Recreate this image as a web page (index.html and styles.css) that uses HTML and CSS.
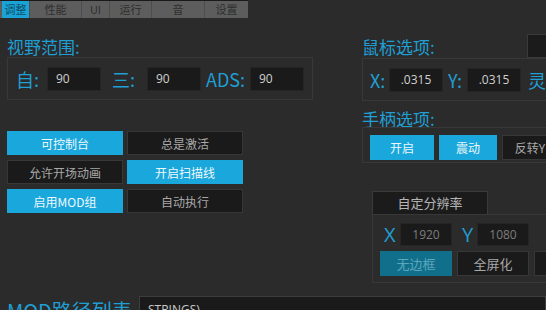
FILE: index.html
```html
<!DOCTYPE html>
<html>
	<head>
		<meta charset="UTF-8">
		<title>设置</title>
		<link rel="stylesheet" href="styles.css">
	</head>
	<body>
		<div class="tabbar">
			<div class="tab on">调整</div>
			<div class="tab t-perf">性能</div>
			<div class="tab t-ui">UI</div>
			<div class="tab t-run">运行</div>
			<div class="tab t-snd">音</div>
			<div class="tab t-set">设置</div>
		</div>

		<div class="main">
			<div class="col">
				<div class="title">视野范围:</div>
				<div class="group fov">
					<span class="lbl l1">自:</span><div class="field">90</div>
					<span class="lbl l2">三:</span><div class="field">90</div>
					<span class="lbl l3">ADS:</span><div class="field">90</div>
				</div>

				<div class="btngrid">
					<div class="btn on">可控制台</div>
					<div class="btn">总是激活</div>
					<div class="btn">允许开场动画</div>
					<div class="btn on">开启扫描线</div>
					<div class="btn on">启用MOD组</div>
					<div class="btn">自动执行</div>
				</div>
			</div>

			<div class="col">
				<div class="titlerow">
					<div class="title">鼠标选项:</div>
					<div class="dropbox"></div>
				</div>
				<div class="group mouse">
					<span class="lbl m1">X:</span><div class="field mid">.0315</div>
					<span class="lbl m2">Y:</span><div class="field mid">.0315</div>
					<span class="lbl m3">灵</span>
				</div>

				<div class="title small">手柄选项:</div>
				<div class="group pad">
					<div class="btn on b-open">开启</div>
					<div class="btn on b-vib">震动</div>
					<div class="btn b-inv">反转Y</div>
				</div>

				<div class="restab">自定分辨率</div>
				<div class="respanel">
					<div class="resrow">
						<span class="axis ax">X</span><div class="field mid dim">1920</div>
						<span class="axis ay">Y</span><div class="field mid dim">1080</div>
					</div>
					<div class="resrow modes">
						<div class="btn teal">无边框</div>
						<div class="btn">全屏化</div>
						<div class="btn"></div>
					</div>
				</div>
			</div>
		</div>

		<div class="bottom">
			<div class="title big">MOD路径列表</div>
			<div class="strings">STRINGS)</div>
		</div>
	</body>
</html>
```

FILE: styles.css
```css
body{
	margin: 0;
	width: 546px;
	height: 310px;
	overflow: hidden;
	background: #2b2b2b;
	font-family: "Noto Sans CJK SC", "Liberation Sans", sans-serif;
	color: #bbb;
}

/* 顶部标签 */
.tabbar{
	display: flex;
	width: 246px;
	height: 17px;
	padding-left: 2px;
	border-top: 1px solid #1a1a1a;
	background: #5d5d5d;
}
.tab{
	font-size: 11px;
	line-height: 17px;
	text-align: center;
	color: #2e2e2e;
	border-right: 1px solid #4d4d4d;
	box-sizing: border-box;
}
.tab.on{
	width: 28px;
	background: #1aa3d6;
	color: #0f4f6a;
}
.t-perf{ width: 52px; }
.t-ui{ width: 28px; }
.t-run{ width: 42px; }
.t-snd{ width: 53px; }
.t-set{ width: 43px; border-right: 0; }

.main{
	display: grid;
	grid-template-columns: 355px 1fr;
	height: 278px;
	padding-left: 7px;
}
.col{
	display: flex;
	flex-direction: column;
	align-items: flex-start;
}

.title{
	margin-top: 19px;
	font-size: 17px;
	line-height: 20px;
	color: #1f9fd4;
	white-space: nowrap;
}
.title.small{
	margin-top: 9px;
	line-height: 17px;
}
.titlerow{
	display: grid;
	grid-template-columns: 165px 40px;
	align-items: start;
}
.dropbox{
	height: 22px;
	margin-top: 16px;
	background: #1b1b1b;
	border: 1px solid #3a3a3a;
}

.group{
	display: flex;
	align-items: center;
	border: 1px solid #383838;
	box-sizing: border-box;
}
.fov{
	width: 306px;
	height: 43px;
	padding-left: 8px;
}
.mouse{
	width: 200px;
	height: 43px;
	padding-left: 7px;
}
.lbl{
	font-size: 18px;
	color: #1f9fd4;
	line-height: 24px;
}
.l1{ width: 31px; }
.l2{ width: 35px; margin-left: 11px; }
.l3{ width: 44px; margin-left: 5px; }
.m1{ width: 19px; }
.m2{ width: 19px; margin-left: 5px; }
.m3{ margin-left: 7px; }

.field{
	width: 54px;
	height: 24px;
	box-sizing: border-box;
	padding-left: 8px;
	background: #1a1a1a;
	border: 1px solid #252525;
	font-family: "Open Sans", "Liberation Sans", sans-serif;
	font-size: 12px;
	line-height: 22px;
	color: #d0d0d0;
	flex-shrink: 0;
}
.field.mid{
	padding-left: 0;
	text-align: center;
}
.field.dim{
	width: 52px;
	height: 23px;
	color: #7d7d7d;
}

/* 按钮 */
.btngrid{
	display: grid;
	grid-template-columns: 116px 116px;
	grid-auto-rows: 24px;
	gap: 5px 4px;
	margin-top: 31px;
}
.btn{
	display: flex;
	align-items: center;
	justify-content: center;
	box-sizing: border-box;
	background: #1a1a1a;
	border: 1px solid #373737;
	font-size: 12px;
	color: #a8a8a8;
	white-space: nowrap;
	flex-shrink: 0;
}
.btn.on{
	background: #1aa7db;
	border-color: #1aa7db;
	color: #eef8fc;
}
.btn.teal{
	background: #10708c;
	border-color: #10708c;
	color: #5ea6bb;
}

.pad{
	width: 200px;
	height: 36px;
	padding: 7px 0 0 7px;
	align-items: flex-start;
	gap: 5px;
}
.pad .btn{ height: 25px; }
.b-open{ width: 64px; }
.b-vib{ width: 58px; }
.b-inv{ width: 56px; }

.restab{
	width: 116px;
	height: 24px;
	margin: 28px 0 0 10px;
	box-sizing: border-box;
	background: #1b1b1b;
	border: 1px solid #3a3a3a;
	font-size: 13px;
	line-height: 22px;
	text-align: center;
	color: #b5b5b5;
}
.respanel{
	width: 200px;
	height: 69px;
	margin: -1px 0 0 10px;
	box-sizing: border-box;
	border: 1px solid #383838;
	padding: 8px 0 0 7px;
}
.resrow{
	display: flex;
	align-items: center;
}
.axis{
	font-family: "Open Sans", "Liberation Sans", sans-serif;
	font-size: 20px;
	line-height: 23px;
	color: #1f9fd4;
}
.ax{ width: 16px; margin-left: 4px; }
.ay{ width: 15px; margin-left: 10px; }
.modes{
	gap: 5px;
	margin-top: 5px;
}
.modes .btn{
	width: 72px;
	height: 25px;
	font-size: 13px;
}

/* 底部 */
.bottom{
	display: flex;
	align-items: flex-start;
	padding-left: 7px;
}
.title.big{
	margin-top: 2px;
	width: 132px;
	font-size: 20px;
	line-height: 26px;
}
.strings{
	flex: 1;
	height: 20px;
	box-sizing: border-box;
	padding: 3px 0 0 8px;
	background: #1a1a1a;
	border: 1px solid #3e3e3e;
	font-family: "Open Sans", "Liberation Sans", sans-serif;
	font-size: 12px;
	line-height: 20px;
	color: #c8c8c8;
}
```
